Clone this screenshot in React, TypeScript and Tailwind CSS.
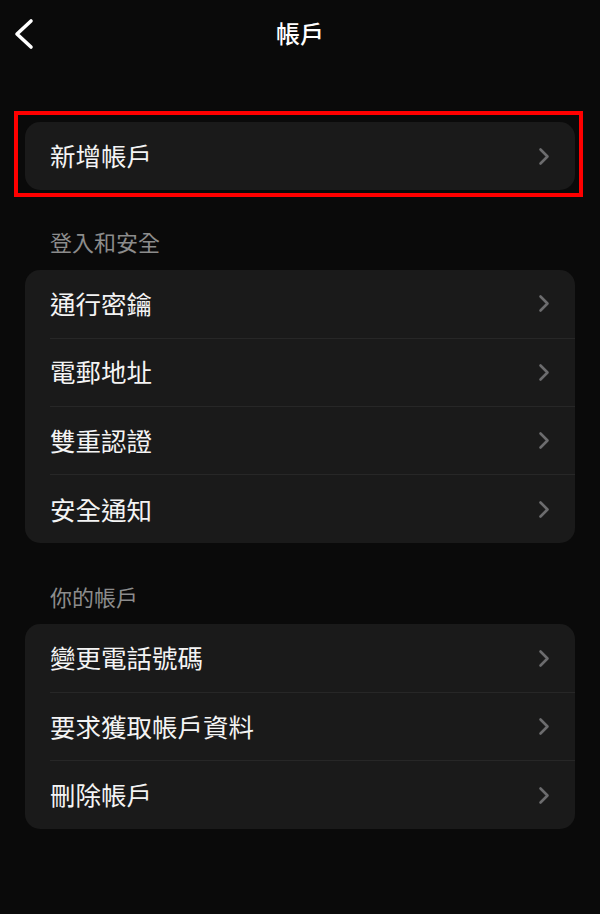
import React from "react";

const Chevron = () => (
  <svg width="12" height="19" viewBox="0 0 12 19" fill="none" className="shrink-0">
    <path d="M2.5 2.5 L9.5 9.5 L2.5 16.5" stroke="#6c6c6e" strokeWidth="2.6" strokeLinecap="round" strokeLinejoin="round" />
  </svg>
);

const Row = ({ label, last }: { label: string; last?: boolean }) => (
  <div className="pl-[25px] h-[68.3px]">
    <div
      className={
        "h-full flex items-center justify-between pr-[25px] " +
        (last ? "" : "border-b border-[#272727]")
      }
    >
      <span className="text-[25.5px] leading-none text-[#f4f4f4] -mt-[2px]">{label}</span>
      <Chevron />
    </div>
  </div>
);

const Card = ({ items }: { items: string[] }) => (
  <div className="mx-[25px] bg-[#1a1a1a] rounded-[15px] overflow-hidden">
    {items.map((it, i) => (
      <Row key={it} label={it} last={i === items.length - 1} />
    ))}
  </div>
);

const SectionHeader = ({ children }: { children: React.ReactNode }) => (
  <div className="px-[50px] h-[30px] flex items-center text-[22px] leading-none text-[#8c8c8c]">
    {children}
  </div>
);

export default function App() {
  return (
    <div
      className="relative w-[600px] h-[914px] bg-[#0a0a0a] overflow-hidden"
      style={{ fontFamily: '"Noto Sans CJK TC", "Noto Sans CJK SC", "Noto Sans", sans-serif' }}
    >
      {/* Nav bar */}
      <div className="relative h-[68px] flex items-center justify-center">
        <div className="absolute left-[12px] top-[18px]">
          <svg width="24" height="32" viewBox="0 0 24 32" fill="none">
            <path d="M19 3 L5 16 L19 29" stroke="#ffffff" strokeWidth="3.6" strokeLinecap="round" strokeLinejoin="round" />
          </svg>
        </div>
        <span className="text-[24px] font-medium text-white leading-none -mt-[2px]">帳戶</span>
      </div>

      <div className="pt-[54px]">
        <Card items={["新增帳戶"]} />

        <div className="mt-[36px] mb-[14px]">
          <SectionHeader>登入和安全</SectionHeader>
        </div>
        <Card items={["通行密鑰", "電郵地址", "雙重認證", "安全通知"]} />

        <div className="mt-[38px] mb-[13px]">
          <SectionHeader>你的帳戶</SectionHeader>
        </div>
        <Card items={["變更電話號碼", "要求獲取帳戶資料", "刪除帳戶"]} />
      </div>

      {/* Red highlight annotation */}
      <div className="absolute left-[14px] top-[111px] w-[569px] h-[86px] border-[4px] border-[#ff0000]" />
    </div>
  );
}
